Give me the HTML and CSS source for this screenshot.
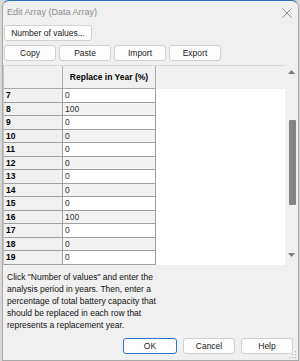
FILE: index.html
```html
<!DOCTYPE html>
<html>
<head>
<meta charset="utf-8">
<link rel="stylesheet" href="styles.css">
</head>
<body>
<div class="window">
  <div class="titlebar">
    <span class="title">Edit Array (Data Array)</span>
    <svg class="close" width="10" height="10" viewBox="0 0 10 10"><path d="M0.5 0.5L9.5 9.5M9.5 0.5L0.5 9.5" stroke="#8a8a8a" stroke-width="1"/></svg>
  </div>
  <div class="row1">
    <button class="btn nv">Number of values...</button>
  </div>
  <div class="row2">
    <button class="btn b4">Copy</button>
    <button class="btn b4">Paste</button>
    <button class="btn b4">Import</button>
    <button class="btn b4">Export</button>
  </div>
  <div class="tablewrap">
    <div class="grid">
      <div class="hcell corner"></div>
      <div class="hcell colhead">Replace in Year (%)</div>
      <div class="hcell filler"></div>

      <div class="lab">7</div><div class="val">0</div><div class="fill"></div>
      <div class="lab">8</div><div class="val alt">100</div><div class="fill"></div>
      <div class="lab">9</div><div class="val">0</div><div class="fill"></div>
      <div class="lab">10</div><div class="val alt">0</div><div class="fill"></div>
      <div class="lab">11</div><div class="val">0</div><div class="fill"></div>
      <div class="lab">12</div><div class="val alt">0</div><div class="fill"></div>
      <div class="lab">13</div><div class="val">0</div><div class="fill"></div>
      <div class="lab">14</div><div class="val alt">0</div><div class="fill"></div>
      <div class="lab">15</div><div class="val">0</div><div class="fill"></div>
      <div class="lab">16</div><div class="val alt">100</div><div class="fill"></div>
      <div class="lab">17</div><div class="val">0</div><div class="fill"></div>
      <div class="lab">18</div><div class="val alt">0</div><div class="fill"></div>
      <div class="lab">19</div><div class="val">0</div><div class="fill"></div>
    </div>
    <div class="scrollbar">
      <svg class="arrow" width="7" height="4" viewBox="0 0 7 4"><path d="M0 4L3.5 0L7 4Z" fill="#7a7a7a"/></svg>
      <div class="track"><div class="thumb"></div></div>
      <svg class="arrow" width="7" height="4" viewBox="0 0 7 4"><path d="M0 0L3.5 4L7 0Z" fill="#7a7a7a"/></svg>
    </div>
  </div>
  <p class="help">Click "Number of values" and enter the analysis period in years. Then, enter a percentage of total battery capacity that should be replaced in each row that represents a replacement year.</p>
  <div class="footer">
    <button class="btn fb ok">OK</button>
    <button class="btn fb">Cancel</button>
    <button class="btn fb">Help</button>
  </div>
  <svg class="grip" width="8" height="8" viewBox="0 0 8 8"><g fill="#b0b0b0"><rect x="6" y="0" width="1.2" height="1.2"/><rect x="3" y="3" width="1.2" height="1.2"/><rect x="6" y="3" width="1.2" height="1.2"/><rect x="0" y="6" width="1.2" height="1.2"/><rect x="3" y="6" width="1.2" height="1.2"/><rect x="6" y="6" width="1.2" height="1.2"/></g></svg>
</div>
</body>
</html>
```

FILE: styles.css
```css
* { box-sizing: border-box; }
html, body { margin: 0; padding: 0; }
body {
  background: #d8d8d8;
  width: 300px;
  height: 361px;
  overflow: hidden;
  font-family: "Liberation Sans", Arial, sans-serif;
  font-size: 8.5px;
  color: #000;
}
.window {
  position: relative;
  margin-left: 2px;
  width: 297px;
  height: 361px;
  background: #f0f0f0;
  border: 1px solid #a8a8a8;
  border-top-color: #2a6fc0;
  border-radius: 7px 7px 0 0;
  display: flex;
  flex-direction: column;
}
.titlebar {
  height: 22px;
  display: flex;
  align-items: center;
  justify-content: space-between;
  padding: 0 6px 0 4px;
}
.title { color: #8f8f8f; font-size: 9px; }
.close { margin-top: 1px; }
.btn {
  font-family: "Liberation Sans", Arial, sans-serif;
  font-size: 8.5px;
  height: 16px;
  padding: 0;
  background: #fdfdfd;
  border: 1px solid #d0d0d0;
  border-radius: 3px;
  color: #1a1a1a;
  line-height: 14px;
  white-space: nowrap;
}
.row1 { padding: 2px 0 0 1px; height: 18px; }
.nv { width: 88px; }
.row2 {
  display: flex;
  gap: 3px;
  padding: 4px 0 0 1px;
  height: 20px;
}
.b4 { width: 52px; }
.tablewrap {
  margin-top: 4px;
  display: flex;
  height: 200px;
}
.grid {
  width: 282px;
  display: grid;
  grid-template-columns: 59px 93px 1fr;
  grid-template-rows: 23px repeat(13, 13.5px);
  background: #fff;
  border-left: 1px solid #c8c8c8;
  border-top: 1px solid #d8d8d8;
}
.hcell { background: #f0f0f0; }
.corner { border-right: 1px solid #a8a8a8; border-bottom: 1px solid #a8a8a8; }
.colhead {
  font-weight: bold;
  display: flex;
  align-items: center;
  justify-content: center;
  border-bottom: 1px solid #a8a8a8;
  border-right: 1px solid #a8a8a8;
  font-size: 8.5px;
  white-space: nowrap;
}
.filler { background: #f0f0f0; }
.lab {
  background: #f0f0f0;
  font-weight: bold;
  padding-left: 2px;
  border-right: 1px solid #a0a0a0;
  border-bottom: 1px solid #a0a0a0;
  line-height: 13px;
  font-size: 8.5px;
}
.val {
  background: #fff;
  padding-left: 2px;
  border-right: 1px solid #a0a0a0;
  border-bottom: 1px solid #a0a0a0;
  line-height: 13px;
  font-size: 8.5px;
  color: #333;
}
.val.alt { background: #f3f3f3; }
.fill { background: #fff; }
.scrollbar {
  width: 13px;
  background: #f0f0f0;
  display: flex;
  flex-direction: column;
  align-items: center;
  padding: 5px 0 8px;
}
.track { flex: 1; width: 100%; display: flex; justify-content: center; padding-top: 46px; padding-bottom: 48px; }
.thumb { width: 7px; background: #858585; border-radius: 1px; margin-left: 2px; }
.help {
  margin: 6px 0 0 0;
  padding: 0 4px;
  width: 160px;
  font-size: 8.5px;
  line-height: 12px;
  color: #111;
  height: 61px;
}
.footer {
  display: flex;
  justify-content: flex-end;
  gap: 6px;
  padding: 6px 5px 0 0;
}
.fb { width: 52px; }
.ok { width: 54px; border-color: #2a74c8; }
.grip { position: absolute; right: 1px; bottom: 1px; }
```
